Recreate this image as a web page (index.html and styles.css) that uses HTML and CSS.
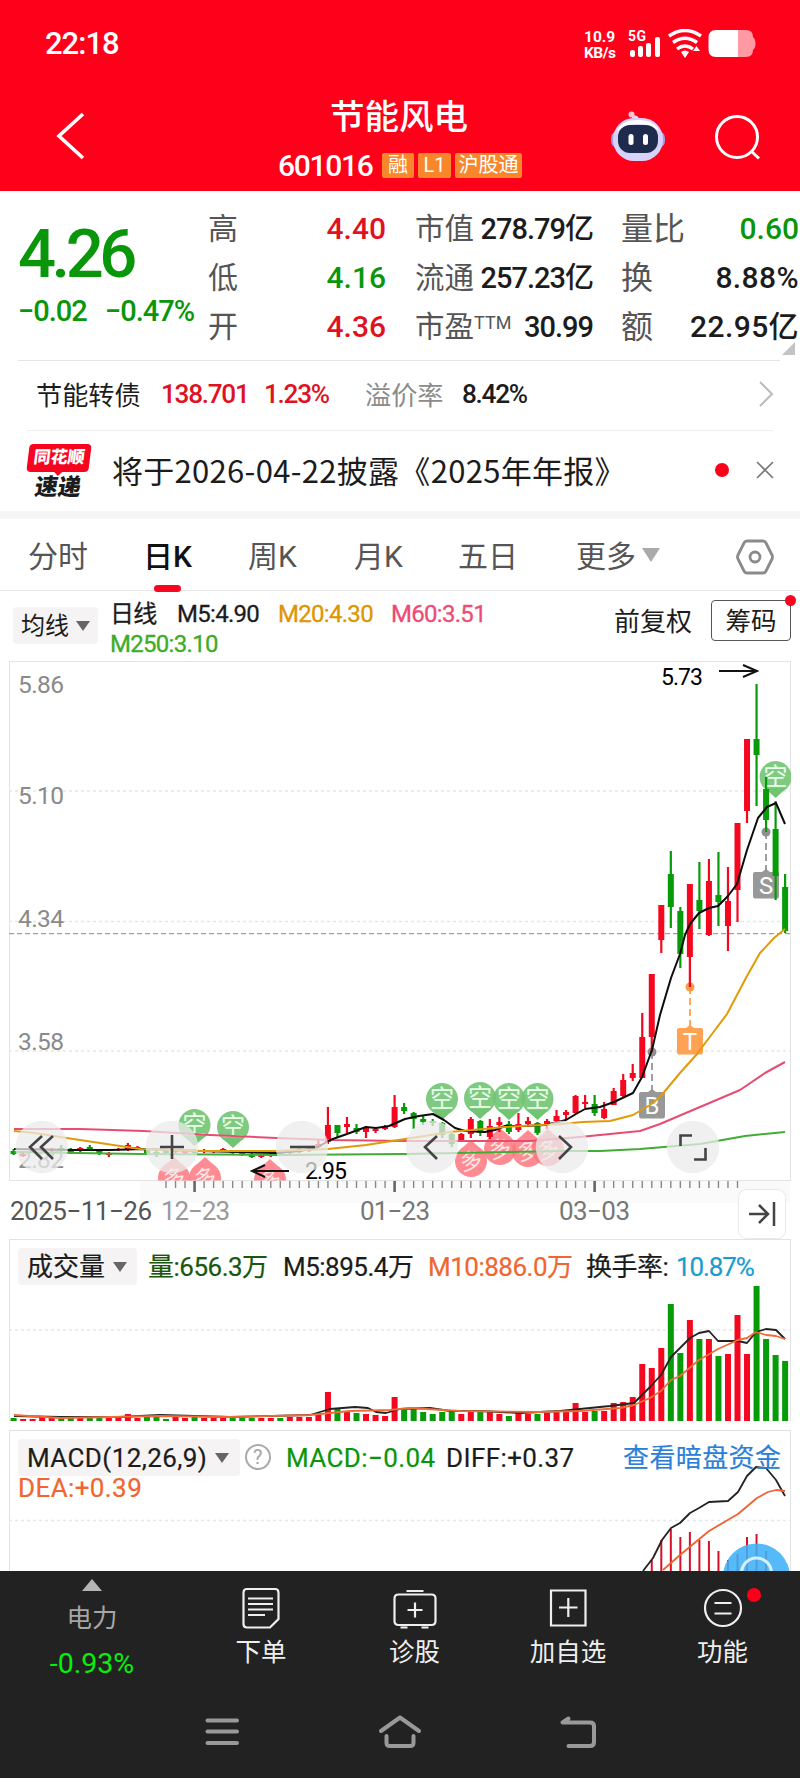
FILE: index.html
```html
<!DOCTYPE html>
<html lang="zh-CN">
<head>
    <meta charset="UTF-8">
    <meta name="viewport" content="width=device-width, initial-scale=1.0">
    <title>节能风电 601016</title>
    <link rel="stylesheet" href="styles.css">
</head>
<body>
    <header>
        <div class="status">
            <span class="clock">22:18</span>
            <span class="speed">10.9<br><i>KB/s</i></span>
            <svg class="phone-icons" width="130" height="30" viewBox="626 29 130 30" fill="#fff">
                <text x="628" y="41" font-size="14" font-weight="700" textLength="18">5G</text>
                <rect x="630" y="50" width="5" height="7" rx="2"/>
                <rect x="638" y="46" width="5" height="11" rx="2"/>
                <rect x="646" y="43" width="5" height="14" rx="2"/>
                <rect x="655" y="37" width="5" height="20" rx="2"/>
                <g fill="none" stroke="#fff" stroke-width="3.4">
                    <path d="M669 36Q685 25 701 36"/>
                    <path d="M673 42.500Q685 34 697 42.500"/>
                    <path d="M677 49Q685 43 693 49"/>
                </g>
                <path d="M681 52Q685 49 689 52L685 58Z M693 51L696.500 46L700 51Z"/>
                <path opacity=".6" d="M736 30H746Q753 30 753 37Q755.500 39 755.500 43.500Q755.500 48 753 50Q753 57 746 57H736Z"/>
                <path d="M738 30V57H716Q708.500 57 708.500 49V38Q708.500 30 716 30Z"/>
            </svg>
        </div>
        <div class="nav">
            <svg class="back" width="32" height="50" viewBox="55 111 32 50"><path d="M83 114L59 136L83 158" fill="none" stroke="#fff" stroke-width="3.600"/></svg>
            <div class="title">
                <h1>节能风电</h1>
                <div class="code"><b>601016</b><span class="w32">融</span><span class="w33">L1</span><span class="w67">沪股通</span></div>
            </div>
            <svg class="robot" width="56" height="52" viewBox="610 110 56 52">
                <path d="M638 121Q638 116 632 117" fill="none" stroke="#f4d6ee" stroke-width="3"/>
                <circle cx="631.500" cy="114.500" r="3" fill="#ffc4d4"/>
                <rect x="611" y="131" width="54" height="17" rx="7" fill="#a59be8"/>
                <rect x="613" y="118" width="50" height="43" rx="21" fill="#d6d2fa"/>
                <path d="M617 132Q620 120 638 120Q655 120 659 131Q650 124 638 124Q625 124 617 132Z" fill="#fff"/>
                <rect x="618" y="125" width="40" height="28" rx="12" fill="#1e2b4d"/>
                <rect x="628.500" y="134" width="5" height="11" rx="2.500" fill="#fff"/>
                <rect x="643" y="134" width="5" height="11" rx="2.500" fill="#fff"/>
            </svg>
            <svg class="search" width="50" height="50" viewBox="713 112 50 50" fill="none" stroke="#fff" stroke-width="3"><circle cx="737" cy="137" r="20.500"/><path d="M751 151L759 158.500"/></svg>
        </div>
    </header>

    <section class="quote">
        <div class="price green">
            <div class="now">4.26</div>
            <div class="diff"><span>−0.02</span><span>−0.47%</span></div>
        </div>
        <dl class="c2">
            <dt>高</dt><dd class="red">4.40</dd>
            <dt>低</dt><dd class="green">4.16</dd>
            <dt>开</dt><dd class="red">4.36</dd>
        </dl>
        <dl class="c3">
            <dt>市值</dt><dd>278.79亿</dd>
            <dt>流通</dt><dd>257.23亿</dd>
            <dt>市盈<sup>TTM</sup></dt><dd>30.99</dd>
        </dl>
        <dl class="c4">
            <dt>量比</dt><dd class="green">0.60</dd>
            <dt>换</dt><dd>8.88%</dd>
            <dt>额</dt><dd>22.95亿</dd>
        </dl>
        <i class="corner"></i>
    </section>

    <section class="bond">
        <span>节能转债</span><b class="red">138.701</b><b class="red">1.23%</b><span class="gray">溢价率</span><b>8.42%</b>
        <svg width="16" height="28" viewBox="0 0 16 28"><path d="M1 2L13 14L1 26" fill="none" stroke="#bbb" stroke-width="2"/></svg>
    </section>

    <section class="notice">
        <div class="logo"><b>同花顺</b><i>速递</i></div>
        <p>将于2026-04-22披露《2025年年报》</p>
        <i class="dot"></i>
        <svg width="20" height="20" viewBox="0 0 20 20"><path d="M2 2L18 18M18 2L2 18" stroke="#777" stroke-width="1.600"/></svg>
    </section>

    <nav class="tabs">
        <span>分时</span><span class="active">日K</span><span>周K</span><span>月K</span><span>五日</span><span>更多<i class="tri"></i></span>
        <svg width="38" height="36" viewBox="736 537 38 36" fill="none" stroke="#8b8b8b" stroke-width="2.800"><path d="M747 539H763Q765 539 766 541L772 553Q773 555 772 557L766 569Q765 571 763 571H747Q745 571 744 569L738 557Q737 555 738 553L744 541Q745 539 747 539Z"/><circle cx="755" cy="555" r="5"/></svg>
    </nav>

    <section class="ma">
        <div class="pick">均线<i class="tri"></i></div>
        <div class="legend">
            <span>日线</span><span>M5:4.90</span><span class="orange">M20:4.30</span><span class="pink">M60:3.51</span>
            <span class="lime">M250:3.10</span>
        </div>
        <span class="adjust">前复权</span>
        <div class="chips">筹码<i></i></div>
    </section>

    <svg id="kline" width="800" height="578" viewBox="0 661 800 578"></svg>

    <section class="panel vol">
        <svg id="volume" width="782" height="182" viewBox="9 1239 782 182"></svg>
        <div class="panel-head">
            <div class="pick">成交量<i class="tri"></i></div>
            <span class="dgreen">量:656.3万</span><span>M5:895.4万</span><span class="org">M10:886.0万</span><span>换手率:</span><span class="cyan">10.87%</span>
        </div>
    </section>

    <section class="panel macd">
        <svg id="macd" width="782" height="141" viewBox="9 1430 782 141"></svg>
        <div class="panel-head">
            <div class="pick">MACD(12,26,9)<i class="tri"></i></div>
            <i class="help">?</i>
            <span class="green">MACD:−0.04</span><span>DIFF:+0.37</span><span class="blue">查看暗盘资金</span>
            <span class="org dea">DEA:+0.39</span>
        </div>
    </section>

    <footer>
        <div class="actions">
            <div class="sector"><i></i><span>电力</span><b>-0.93%</b></div>
            <div>
                <svg width="44" height="44" viewBox="239 1586 44 44"><path d="M247 1589H275Q278.500 1589 278.500 1592.500V1619L270 1627.500H247Q243.500 1627.500 243.500 1624V1592.500Q243.500 1589 247 1589Z M248 1598.500H273M248 1604H273M248 1609.500H273M248 1615H265"/></svg>
                <span>下单</span>
            </div>
            <div>
                <svg width="44" height="44" viewBox="392.500 1586 44 44"><path d="M406 1591H423M398 1594.500H431Q435 1594.500 435 1598.500V1621Q435 1625 431 1625H398Q394 1625 394 1621V1598.500Q394 1594.500 398 1594.500ZM400 1627.500H407M421 1627.500H428M414.500 1602.500V1617.500M407 1610H422"/></svg>
                <span>诊股</span>
            </div>
            <div>
                <svg width="44" height="44" viewBox="546 1586 44 44"><path d="M551 1590.500H585.500V1625.500H551ZM568.300 1598V1617M559 1607.500H577.500"/></svg>
                <span>加自选</span>
            </div>
            <div>
                <svg width="44" height="44" viewBox="700.500 1586 44 44"><path d="M714 1603H731M714 1613.500H731"/><circle cx="722.500" cy="1608" r="18"/></svg>
                <span>功能</span>
                <i class="dot"></i>
            </div>
        </div>
        <svg class="keys" width="800" height="50" viewBox="0 1706 800 50" fill="none" stroke="#999" stroke-width="4" stroke-linecap="round" stroke-linejoin="round">
            <path d="M207.500 1720.500H237M207.500 1731.500H237M207.500 1743H237"/>
            <path d="M381 1731L400 1717.500L419 1731M386.500 1736V1743Q386.500 1746 390 1746H410Q413.500 1746 413.500 1743V1736"/>
            <path d="M568.500 1718.500L562.500 1722.500H590Q594 1722.500 594 1726V1742Q594 1746 590 1746H568.500"/>
        </svg>
    </footer>

    <script src="chart.js"></script>
</body>
</html>
```
FILE: styles.css
```css
* {
    box-sizing: border-box;
}
body {
    font-family: Roboto, "Noto Sans CJK SC", sans-serif;
    margin: 0;
    width: 800px;
    background-color: #fff;
    color: #1c1c1c;
    white-space: nowrap;
}
svg {
    display: block;
    flex: none;
}
i {
    font-style: normal;
}
.red { color: #e01222; }
.green { color: #0a960a; }
.gray { color: #8b8b8b; }
.orange { color: #df9500; }
.pink { color: #ee4c74; }
.lime { color: #3cad25; }
.dgreen { color: #19570d; }
.org { color: #f06530; }
.cyan { color: #199cce; }
.blue { color: #2c7fd8; }
.tri {
    display: inline-block;
    border: 7px solid transparent;
    border-top: 10px solid #666;
    border-bottom: 0;
    vertical-align: middle;
}

/* header */
header {
    height: 191px;
    background-color: #ff001a;
    color: #fff;
}
.status {
    display: flex;
    height: 88px;
    padding-left: 45px;
}
.clock {
    width: 539px;
    font-size: 31px;
    font-weight: 500;
    letter-spacing: -1px;
    line-height: 88px;
}
.speed {
    width: 42px;
    padding-top: 29px;
    font-size: 15.500px;
    font-weight: 700;
    line-height: 16px;
}
.speed i {
    letter-spacing: -.500px;
}
.phone-icons {
    margin-top: 29px;
}
.nav {
    display: flex;
}
.back {
    margin: 23px 0 0 55px;
}
.title {
    width: 523px;
    padding-left: 191px;
}
.title h1 {
    margin: 3px 0 0 52px;
    font-size: 34.500px;
    font-weight: 500;
    line-height: 53px;
}
.code {
    display: flex;
    align-items: center;
    gap: 4px;
    height: 43px;
}
.code b {
    width: 100px;
    font-size: 30px;
    font-weight: 500;
    letter-spacing: -1.300px;
}
.code span {
    height: 25px;
    border-radius: 2px;
    background-color: #f8872c;
    font-size: 20px;
    line-height: 24px;
    text-align: center;
}
.w32 { width: 32px; }
.w33 { width: 33px; }
.w67 { width: 67px; }
.robot {
    margin: 22px 47px 0 0;
}
.search {
    margin-top: 24px;
}

/* quote numbers */
.quote {
    display: flex;
    position: relative;
    height: 170px;
    padding-top: 13px;
}
.quote:after {
    content: "";
    position: absolute;
    left: 18px;
    right: 20px;
    bottom: 0;
    height: 1px;
    background-color: #e4e4e4;
}
.price {
    width: 208px;
    padding-left: 18px;
}
.now {
    height: 79px;
    font-size: 67px;
    font-weight: 500;
    letter-spacing: -4.500px;
    line-height: 101px;
}
.diff {
    display: flex;
    font-size: 29px;
    font-weight: 500;
    letter-spacing: -1px;
    line-height: 56px;
}
.diff span:first-child {
    width: 87px;
}
dl {
    display: grid;
    grid-template-columns: 60px 1fr;
    grid-auto-rows: 49px;
    margin: 0;
    line-height: 50px;
    font-size: 30px;
}
dt {
    color: #555;
}
dd {
    margin: 0;
    text-align: right;
    font-weight: 500;
}
.c2 { width: 178px; }
.c3 { width: 178px; margin-left: 29px; }
.c4 { width: 178px; margin-left: 28px; font-size: 32px; }
.c3 dt { font-size: 29.500px; }
.c3 dd { font-size: 29px; letter-spacing: -1px; }
.c4 dd { font-size: 30px; letter-spacing: .400px; }
.c4 .green { letter-spacing: 0; }
sup {
    font-size: 18px;
    line-height: 0;
    vertical-align: 8px;
}
.corner {
    position: absolute;
    right: 5px;
    bottom: 6px;
    border-left: 13px solid transparent;
    border-bottom: 13px solid #c4c4c4;
}

/* bond row */
.bond {
    display: grid;
    grid-template-columns: 125px 103px 101px 97px 297px 16px;
    align-items: center;
    height: 70px;
    margin: 0 27px;
    padding: 0 0 3px 9px;
    border-bottom: 1px solid #eee;
    font-size: 26.200px;
}
.bond b {
    font-weight: 500;
    letter-spacing: -1.300px;
}

/* notice */
.notice {
    display: flex;
    align-items: center;
    height: 88px;
    padding: 0 25px 8px 28px;
    border-bottom: 8px solid #f6f6f6;
}
.logo {
    width: 84px;
    padding-top: 12px;
}
.logo b {
    position: relative;
    display: block;
    width: 62px;
    height: 28px;
    border-radius: 4px;
    background-color: #f7051f;
    color: #fff;
    font-size: 17px;
    font-weight: 900;
    line-height: 27px;
    text-align: center;
    transform: skewX(-7deg);
}
.logo b:after {
    content: "";
    position: absolute;
    left: 27px;
    top: 27px;
    border: 5px solid transparent;
    border-top-color: #f7051f;
}
.logo i {
    display: block;
    margin-left: 7px;
    font-size: 23px;
    font-weight: 900;
    line-height: 31px;
    transform: skewX(-9deg);
}
.notice p {
    width: 603px;
    margin: 4px 0 0;
    font-family: "Noto Sans CJK SC", sans-serif;
    font-size: 31px;
    letter-spacing: .300px;
}
.notice .dot,
.notice svg {
    position: relative;
    top: 3px;
}
.dot {
    width: 14px;
    height: 14px;
    margin-right: 26px;
    border-radius: 50%;
    background-color: #fb0018;
}

/* tabs */
.tabs {
    display: grid;
    grid-template-columns: 115px 105px 106px 104px 118px 160px 38px;
    align-items: center;
    height: 72px;
    padding-left: 28px;
    border-bottom: 1px solid #e6e6e6;
    color: #555;
    font-size: 30px;
}
.tabs span {
    position: relative;
    line-height: 75px;
}
.tabs .active {
    color: #111;
    font-weight: 500;
}
.tabs .active:after {
    content: "";
    position: absolute;
    left: 11px;
    bottom: 2px;
    width: 27px;
    height: 7px;
    border-radius: 4px;
    background-color: #f9051e;
}
.tabs .tri {
    margin: -9px 0 0 6px;
    border-width: 14px 9px 0;
    border-top-color: #aaa;
}

/* moving averages */
.ma {
    display: flex;
    height: 70px;
    padding-left: 13px;
}
.pick {
    height: 37px;
    border-radius: 4px;
    background-color: #f5f3f4;
    line-height: 38px;
}
.ma .pick {
    width: 85px;
    margin: 16px 12px 0 0;
    padding-left: 8px;
    font-size: 24px;
}
.ma .tri {
    margin: -4px 0 0 7px;
}
.legend {
    display: grid;
    grid-template-columns: 67px 101px 113px 100px;
    grid-template-rows: 45px 30px;
    width: 504px;
    font-size: 24px;
    letter-spacing: -.700px;
    line-height: 46px;
    -webkit-text-stroke: .300px;
}
.legend .lime {
    grid-column: 1 / 4;
    line-height: 17px;
}
.adjust {
    width: 97px;
    font-size: 26px;
    line-height: 62px;
}
.chips {
    position: relative;
    width: 80px;
    height: 41px;
    margin-top: 9px;
    border: 1px solid #555;
    border-radius: 4px;
    font-size: 25.500px;
    line-height: 41px;
    text-align: center;
}
.chips i {
    position: absolute;
    right: -6px;
    top: -6px;
    width: 11px;
    height: 11px;
    border-radius: 50%;
    background-color: #f9051e;
}

/* lower panels */
.panel {
    display: grid;
    width: 782px;
    margin-left: 9px;
}
.panel > * {
    grid-area: 1 / 1;
}
.panel-head {
    display: grid;
    align-content: start;
    padding: 9px 0 0 9px;
    font-size: 26px;
    line-height: 38px;
    -webkit-text-stroke: .200px;
}
.panel .pick {
    padding-left: 9px;
}
.panel .tri {
    margin: -4px 0 0 8px;
}
.vol {
    margin-bottom: 9px;
}
.vol .panel-head {
    grid-template-columns: 130px 135px 145px 158px 90px 90px;
    letter-spacing: -.500px;
}
.vol .pick { width: 119px; letter-spacing: 0; }
.vol .cyan { letter-spacing: -1.100px; }
.macd .panel-head {
    grid-template-columns: 227px 41px 160px 177px 170px;
    grid-template-rows: 37px 24px;
    letter-spacing: .400px;
}
.macd .pick { width: 222px; }
.help {
    width: 26px;
    height: 26px;
    margin-top: 5px;
    border: 2px solid #aaa;
    border-radius: 50%;
    color: #aaa;
    font-size: 20px;
    line-height: 23px;
    text-align: center;
}
.dea {
    grid-column: 1 / 3;
    line-height: 25px;
}

/* bottom bar */
footer {
    height: 207px;
    background-color: #222;
    color: #eee;
}
.actions {
    display: grid;
    grid-template-columns: 184px 154px 153px 154px 155px;
    height: 135px;
}
.actions > div {
    position: relative;
    display: flex;
    flex-direction: column;
    align-items: center;
    padding-top: 15px;
    font-size: 25.500px;
    line-height: 44px;
}
.actions svg {
    fill: none;
    stroke: #eee;
    stroke-width: 2.200;
}
.actions .sector {
    padding-top: 8px;
    color: #a6a6a6;
}
.sector i {
    border: 10px solid transparent;
    border-top: 0;
    border-bottom: 12px solid #b4b4b4;
}
.sector span {
    line-height: 54px;
}
.sector b {
    color: #04f10b;
    font-size: 28.500px;
    font-weight: 400;
    line-height: 38px;
}
.actions .dot {
    position: absolute;
    left: 102px;
    top: 17px;
    margin: 0;
}
```
FILE: chart.js
```js
const RED = '#f5071f';
const GREEN = '#079a09';
const STEP = 9.525;
const X0 = 13.6;
const xAt = i => X0 + i * STEP;

const line = (pts, color, w = 2) =>
    `<polyline points="${pts}" fill="none" stroke="${color}" stroke-width="${w}" stroke-linejoin="round"/>`;
const dash = (y, color, d) =>
    `<path d="M9 ${y}H791" stroke="${color}" stroke-width="1.3" stroke-dasharray="${d}"/>`;

// color, high, body top, body bottom, low
const candles = [
    'g 1149 1151 1154 1155', 'r 1153 1154 1156 1157', 'r 1148 1149 1152 1153', 'r 1147 1148 1150 1151',
    'r 1148 1149 1151 1152', 'g 1145 1148 1151 1152', 'g 1148 1150 1152 1154', 'r 1147 1148 1150 1152',
    'g 1145 1147 1150 1151', 'g 1149 1151 1154 1155', 'r 1152 1154 1155 1157', 'r 1148 1149 1150 1151',
    'r 1143 1145 1150 1151', 'r 1146 1147 1149 1150', 'g 1149 1150 1153 1154', 'g 1150 1152 1155 1157',
    'g 1150 1151 1153 1154', 'r 1149 1150 1152 1153', 'r 1150 1151 1153 1154', 'g 1149 1151 1153 1155',
    'r 1149 1150 1152 1153', 'r 1150 1151 1152 1153', 'r 1148 1149 1151 1152', 'g 1150 1151 1153 1155',
    'g 1152 1153 1155 1156', 'g 1153 1155 1157 1158', 'r 1154 1155 1157 1158', 'r 1153 1154 1156 1157',
    'g 1150 1152 1155 1156', 'r 1150 1151 1153 1154', 'r 1148 1149 1152 1153', 'r 1147 1149 1151 1152',
    'r 1140 1144 1147 1148', 'r 1107 1125 1142 1144', 'g 1125 1125 1133 1138', 'r 1117 1124 1127 1134',
    'g 1124 1128 1132 1134', 'r 1126 1127 1132 1138', 'r 1128 1129 1131 1133', 'r 1125 1126 1129 1130',
    'r 1095 1107 1127 1128', 'g 1103 1107 1111 1114', 'g 1112 1113 1119 1129', 'g 1116 1119 1122 1125',
    'g 1119 1121 1123 1126', 'g 1122 1123 1135 1138', 'g 1132 1134 1144 1147', 'r 1133 1134 1142 1142',
    'r 1117 1119 1134 1138', 'g 1120 1121 1133 1136', 'r 1119 1126 1137 1139', 'r 1117 1122 1125 1132',
    'g 1121 1124 1132 1134', 'r 1113 1124 1130 1132', 'r 1117 1121 1124 1127', 'g 1122 1123 1133 1135',
    'r 1119 1121 1126 1129', 'r 1110 1116 1121 1122', 'r 1110 1112 1115 1119', 'r 1095 1096 1113 1114',
    'r 1095 1102 1104 1108', 'g 1095 1104 1113 1116', 'r 1102 1109 1118 1119', 'r 1088 1091 1105 1105',
    'r 1074 1080 1096 1097', 'r 1064 1073 1078 1081', 'r 1013 1037 1078 1078', 'r 974 974 1037 1052',
    'r 905 905 940 953', 'g 851 874 907 928', 'g 907 911 954 968', 'r 884 884 957 987',
    'g 862 900 911 929', 'r 859 881 935 936', 'g 852 895 902 926', 'r 867 901 926 951',
    'r 823 823 890 922', 'r 739 739 811 823', 'g 684 739 755 806', 'g 777 789 820 832',
    'g 801 829 876 900', 'g 874 887 931 933'
];

const volumes = [3, 2, 2, 4, 3, 3, 3, 3, 3, 3, 3, 3, 7, 3, 4, 4, 2, 4, 3, 4, 3, 3, 3, 3, 3, 3, 3, 3, 3, 4, 4, 4,
    8, 29, 12, 10, 8, 7, 6, 5, 24, 11, 12, 9, 7, 9, 9, 7, 9, 10, 9, 7, 5, 8, 7, 7, 8, 9, 9, 18, 9, 10, 10, 18, 19, 24,
    57, 53, 73, 117, 68, 101, 82, 82, 65, 67, 106, 67, 135, 82, 66, 60];

const sell = (x, y) => `<g><path d="M${x - 11} ${y + 11}L${x} ${y + 21}L${x + 11} ${y + 11}Z" fill="#70c472"/>
    <circle cx="${x}" cy="${y}" r="16" fill="#70c472" fill-opacity=".9"/>
    <text x="${x}" y="${y + 8}" font-size="24" fill="#e9ffe9" text-anchor="middle">空</text></g>`;
const buy = (x, y) => `<g opacity=".85"><path d="M${x - 10} ${y - 12}L${x} ${y - 21}L${x + 10} ${y - 12}Z" fill="#ff7780"/>
    <circle cx="${x}" cy="${y}" r="16" fill="#ff7780"/>
    <text x="${x}" y="${y + 8}" font-size="22" fill="#ffe3e3" text-anchor="middle" transform="rotate(-12 ${x} ${y})">多</text></g>`;
const flag = (x, y0, y, t, color) => `<path d="M${x} ${y0}V${y - 14}" stroke="${color}" stroke-width="1.7" stroke-dasharray="7 4"/>
    <circle cx="${x}" cy="${y0}" r="4.5" fill="${color}"/>
    <path d="M${x - 11} ${y - 13}H${x - 4}L${x} ${y - 16}L${x + 4} ${y - 13}H${x + 11}Q${x + 13} ${y - 13} ${x + 13} ${y - 11}V${y + 11}Q${x + 13} ${y + 13.500} ${x + 11} ${y + 13.500}H${x - 11}Q${x - 13} ${y + 13.500} ${x - 13} ${y + 11}V${y - 11}Q${x - 13} ${y - 13} ${x - 11} ${y - 13}Z" fill="${color}" fill-opacity=".92"/>
    <text x="${x}" y="${y + 9}" font-size="24" fill="#fff" text-anchor="middle">${t}</text>`;
const button = (x, d) => `<circle cx="${x}" cy="1147" r="26.300" fill="#ebebeb" fill-opacity=".75"/>
    <path d="${d}" fill="none" stroke="#444" stroke-width="2.6"/>`;

function drawKline() {
    let s = '<defs><clipPath id="box"><rect x="9" y="661" width="782" height="519.500"/></clipPath></defs>';
    s += '<rect x="140" y="1181" width="650" height="22" fill="#fafafa"/>';
    s += '<rect x="9.500" y="661.500" width="781" height="519" fill="#fff" stroke="#e3e3e3"/>';
    s += dash(791, '#e6e6e6', '3 3') + dash(921.5, '#e6e6e6', '3 3') + dash(1051, '#e6e6e6', '3 3');
    s += dash(933.7, '#b39b84', '5 3');
    [['5.86', 693], ['5.10', 804], ['4.34', 927], ['3.58', 1050], ['2.82', 1168]].forEach(([t, y]) => {
        s += `<text x="18" y="${y}" font-size="24.5" fill="#8a8a8a" textLength="46">${t}</text>`;
    });
    s += '<g clip-path="url(#box)">';
    [[194.5, 1125], [233, 1127], [442, 1099], [480, 1098], [509, 1099], [537.5, 1099], [775.6, 777]].forEach(p => s += sell(...p));
    [[174, 1178], [205, 1178], [270, 1180], [471, 1161], [500, 1149], [528, 1151], [548, 1150]].forEach(p => s += buy(...p));
    s += '</g>';
    s += flag(652, 1052, 1105, 'B', '#8f8f8f') + flag(690, 987, 1041, 'T', '#ff9a45') + flag(766, 832, 885, 'S', '#8f8f8f');
    candles.forEach((c, i) => {
        const [k, h, t, b, l] = c.split(' ');
        const x = xAt(i), color = k === 'r' ? RED : GREEN;
        s += `<path d="M${x} ${h}V${l}" stroke="${color}" stroke-width="2.2"/>
            <rect x="${x - 3}" y="${t}" width="6" height="${b - t}" fill="${color}"/>`;
    });
    s += line('14,1152 140,1154 276,1155 405,1154 560,1151 600,1151 640,1149 700,1144 745,1136 785,1132', '#41ad34');
    s += line('14,1129 80,1129 144,1131 210,1135 276,1138 330,1140 405,1141 530,1141 580,1137 640,1131 660,1124 700,1107 740,1090 765,1073 785,1062', '#e74d72');
    s += line('14,1149 75,1150 110,1150 144,1149 200,1151 240,1152 276,1153 300,1151 318,1147 330,1140 347,1134 366,1127 376,1128 389,1126 405,1119 419,1116 433,1114 444,1120 455,1128 465,1131 485,1132 495,1130 505,1126 525,1126 545,1125 566,1120 576,1114 585,1109 600,1107 614,1102 633,1093 642,1077 652,1050 660,1015 671,978 680,954 685,935 690,924 699,913 709,908 718,906 728,896 737,884 747,850 758,818 767,807 776,803 785,824', '#0c0c0c');
    s += line('14,1131 35,1133 60,1137 100,1143 140,1149 200,1151 276,1151 328,1149 366,1145 405,1139 450,1132 505,1127 560,1124 583,1122 610,1121 633,1115 650,1105 660,1097 670,1085 680,1073 697,1054 712,1034 727,1014 737,995 747,976 760,953 774,938 785,929', '#e19a08');
    // high and low marks
    s += '<g fill="none" stroke="#111" stroke-width="2"><path d="M719 671H756M743 665L757 671L743 677M289 1171H253M265 1165L252 1171L265 1177"/></g>';
    s += '<text x="661" y="685" font-size="23" textLength="42">5.73</text><text x="305" y="1179" font-size="23" textLength="42">2.95</text>';
    s += button(41.700, 'M42 1136L30 1147L42 1159M53 1136L41 1147L53 1159')
        + button(172, 'M160 1147H184M172 1135V1159') + button(302, 'M290 1147H315')
        + button(432, 'M437 1136L425 1147L437 1159') + button(562, 'M559 1136L571 1147L559 1159')
        + button(693, 'M680.500 1146V1135.500H692M694 1159.500H705.500V1148');
    // time axis
    for (let i = 16; i <= 76; i++) {
        const big = i === 19 || i === 40 || i === 61;
        s += `<path d="M${xAt(i)} 1181V${big ? 1192 : 1188}" stroke="${big ? '#666' : '#888'}" stroke-width="${big ? 2.6 : 1.4}"/>`;
    }
    [['2025−11−26', 10, 142, '#555'], ['12−23', 161, 69, '#999'], ['01−23', 360, 70, '#777'], ['03−03', 559, 71, '#777']].forEach(([t, x, w, c]) => {
        s += `<text x="${x}" y="1220" font-size="26" fill="${c}" textLength="${w}">${t}</text>`;
    });
    s += '<rect x="738.500" y="1189.500" width="47" height="49" rx="8" fill="#fff" stroke="#e9e9e9"/><path d="M749 1214H768M759 1205L768 1214L759 1223M774 1202V1226" fill="none" stroke="#444" stroke-width="2.500"/>';
    document.getElementById('kline').innerHTML = s;
}

function drawVolume() {
    let s = '<path d="M9.500 1421V1239.500H790.500V1421" fill="none" stroke="#e3e3e3"/>' + dash(1330, '#e6e6e6', '3 3');
    volumes.forEach((v, i) => {
        s += `<rect x="${xAt(i) - 3}" y="${1421 - v}" width="6" height="${v}" fill="${candles[i][0] === 'r' ? RED : GREEN}"/>`;
    });
    s += line('14,1416 60,1417 120,1417 160,1415 230,1417 310,1415 330,1409 355,1407 368,1408 376,1412 386,1413 400,1409 430,1408 450,1411 480,1411 520,1413 560,1411 580,1409 610,1406 634,1403 650,1387 661,1375 671,1357 690,1338 699,1333 709,1331 718,1341 738,1341 747,1343 756,1332 766,1329 776,1330 785,1339', '#222', 1.8);
    s += line('14,1415 60,1418 160,1416 230,1417 310,1415 350,1411 390,1410 410,1408 460,1411 540,1412 580,1411 620,1408 634,1405 650,1398 661,1391 671,1380 680,1376 699,1360 718,1349 738,1340 747,1338 756,1332 766,1335 776,1336 785,1339', '#ef6c38', 1.8);
    document.getElementById('volume').innerHTML = s;
}

function drawMacd() {
    const tops = [1560, 1540, 1529, 1537, 1532, 1540, 1541, 1551, 1560, 1554, 1537, 1534, 1551];
    let s = '<path d="M9.500 1571V1430.500H790.500V1571" fill="none" stroke="#e3e3e3"/>' + dash(1520.5, '#e6e6e6', '3 3');
    tops.forEach((y, i) => {
        s += `<path d="M${xAt(67 + i)} ${y}V1571" stroke="#d3122a" stroke-width="2"/>`;
    });
    s += line('643,1571 653,1558 662,1540 671,1528 680,1523 690,1513 699,1508 709,1502 728,1501 738,1492 747,1476 756,1467 766,1468 776,1480 785,1496', '#222', 1.8);
    s += line('663,1570 680,1555 709,1531 738,1514 757,1498 768,1492 776,1490 785,1491', '#f0622f', 1.8);
    s += '<circle cx="756.500" cy="1577" r="33.500" fill="#3eb1f6" fill-opacity=".88"/><circle cx="756.500" cy="1573" r="15" fill="none" stroke="#d5efff" stroke-width="3"/>';
    document.getElementById('macd').innerHTML = s;
}

drawKline();
drawVolume();
drawMacd();
```
